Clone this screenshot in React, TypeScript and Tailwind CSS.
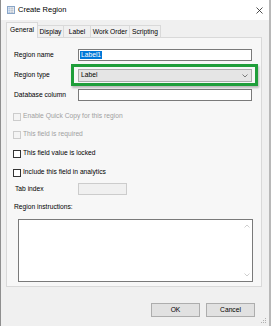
import React from "react";

const tabs = ["General", "Display", "Label", "Work Order", "Scripting"];
const tabWidths: Record<string, string> = {
  General: "w-[32px]",
  Display: "w-[27px]",
  Label: "w-[28px]",
  "Work Order": "w-[40px]",
  Scripting: "w-[32px]",
};

function Check({ label, disabled }: { label: string; disabled?: boolean }) {
  return (
    <div className="ml-[-1px] flex h-[9px] items-center">
      <span
        className={
          disabled
            ? "h-[8px] w-[8px] border border-[#cccccc] bg-[#f4f4f4]"
            : "h-[8px] w-[8px] border border-[#333333] bg-white"
        }
      />
      <span className={disabled ? "ml-[2px] text-[#a0a0a0]" : "ml-[2px] text-black"}>{label}</span>
    </div>
  );
}

function Chevron({ up }: { up?: boolean }) {
  return (
    <svg width="6" height="4" viewBox="0 0 6 4" fill="none">
      <path
        d={up ? "M0.5 3.5L3 1L5.5 3.5" : "M0.5 0.5L3 3L5.5 0.5"}
        stroke="currentColor"
        strokeWidth="0.8"
      />
    </svg>
  );
}

export default function App() {
  return (
    <div className="relative flex h-[326px] w-[271px] flex-col border-l border-r-2 border-l-[#8f8f8f] border-r-[#b8b8b8] bg-[#f0f0f0] font-['Liberation_Sans',Arial,sans-serif] text-[6.7px] leading-none text-black">
      {/* Title bar */}
      <div className="flex h-[20px] items-center bg-white pl-[6px] pr-[6px]">
        <svg width="8" height="8" viewBox="0 0 8 8">
          <rect x="0.5" y="0.5" width="7" height="7" fill="#fff" stroke="#8aa6c8" />
          <rect x="1.5" y="1.6" width="1.2" height="1" fill="#3f78c0" />
          <rect x="3.3" y="1.6" width="3.2" height="1" fill="#9aa5b3" />
          <rect x="1.5" y="3.6" width="1.2" height="1" fill="#3f78c0" />
          <rect x="3.3" y="3.6" width="3.2" height="1" fill="#9aa5b3" />
          <rect x="1.5" y="5.6" width="1.2" height="1" fill="#3f78c0" />
          <rect x="3.3" y="5.6" width="3.2" height="1" fill="#9aa5b3" />
        </svg>
        <span className="ml-[3px] text-[7.5px]">Create Region</span>
        <svg className="ml-auto" width="7" height="7" viewBox="0 0 7 7">
          <path d="M0.5 0.5L6.5 6.5M6.5 0.5L0.5 6.5" stroke="#222" strokeWidth="0.8" />
        </svg>
      </div>

      {/* Tabs + panel */}
      <div className="pl-[5px] pt-[2px]">
        <div className="flex h-[15px] items-end">
          {tabs.map((t, i) =>
            i === 0 ? (
              <div
                key={t}
                className={`${tabWidths[t]} relative z-10 mb-[-1px] flex h-[16px] items-center justify-center border border-b-0 border-[#d9d9d9] bg-[#f7f7f7]`}
              >
                {t}
              </div>
            ) : (
              <div
                key={t}
                className={`${tabWidths[t]} ml-[-1px] flex h-[12px] items-center justify-center border border-b-0 border-[#d9d9d9] bg-[#f0f0f0] pt-[1px]`}
              >
                {t}
              </div>
            )
          )}
        </div>

        <div className="flex h-[250px] w-[256px] flex-col border border-[#d9d9d9] bg-[#f7f7f7] pl-[7px] pt-[11px]">
          <div className="flex h-[12px] items-center">
            <span className="w-[64px]">Region name</span>
            <div className="flex h-[12px] w-[174px] items-center border border-[#7a7a7a] bg-white pl-[1px]">
              <span className="bg-[#0078d7] px-[1px] py-[1px] text-white">Label1</span>
            </div>
          </div>

          <div className="mt-[8px] flex h-[13px] items-center">
            <span className="w-[64px]">Region type</span>
            <div className="relative flex h-[13px] w-[174px] items-center border border-[#acacac] bg-[#e5e5e5] pl-[2px] pr-[3px]">
              <span>Label</span>
              <span className="ml-auto text-[#606060]">
                <Chevron />
              </span>
              <div className="absolute -bottom-[5px] -left-[8px] -right-[7px] -top-[6px] border-[3px] border-[#1f9e3a] shadow-[1px_2px_2px_rgba(0,0,0,0.25)]" />
            </div>
          </div>

          <div className="mt-[7px] flex h-[12px] items-center">
            <span className="w-[64px]">Database column</span>
            <div className="h-[12px] w-[174px] border border-[#7a7a7a] bg-white" />
          </div>

          <div className="mt-[11px]">
            <Check label="Enable Quick Copy for this region" disabled />
          </div>
          <div className="mt-[9px]">
            <Check label="This field is required" disabled />
          </div>
          <div className="mt-[10px]">
            <Check label="This field value is locked" />
          </div>
          <div className="mt-[10px]">
            <Check label="Include this field in analytics" />
          </div>

          <div className="mt-[6px] flex h-[12px] items-center">
            <span className="w-[64px] pl-[1px]">Tab index</span>
            <div className="h-[12px] w-[49px] border border-[#cccccc] bg-[#f0f0f0]" />
          </div>

          <div className="mt-[8px] flex h-[8px] items-center">Region instructions:</div>

          <div className="ml-[4px] mt-[8px] flex h-[63px] w-[235px] border border-[#7a7a7a] bg-white">
            <div className="flex-1" />
            <div className="flex w-[10px] flex-col items-center justify-between py-[4px] text-[#c2c2c2]">
              <Chevron up />
              <Chevron />
            </div>
          </div>
        </div>
      </div>

      {/* Buttons */}
      <div className="mt-[16px] flex justify-end gap-[6px] pr-[14px]">
        <button className="flex h-[14px] w-[49px] items-center justify-center border border-[#adadad] bg-[#e1e1e1]">
          OK
        </button>
        <button className="flex h-[14px] w-[49px] items-center justify-center border border-[#adadad] bg-[#e1e1e1]">
          Cancel
        </button>
      </div>

      {/* Resize grip */}
      <svg className="absolute bottom-[2px] right-[2px]" width="6" height="6" viewBox="0 0 6 6">
        <rect x="4" y="0" width="1" height="1" fill="#b0b0b0" />
        <rect x="2" y="2" width="1" height="1" fill="#b0b0b0" />
        <rect x="4" y="2" width="1" height="1" fill="#b0b0b0" />
        <rect x="0" y="4" width="1" height="1" fill="#b0b0b0" />
        <rect x="2" y="4" width="1" height="1" fill="#b0b0b0" />
        <rect x="4" y="4" width="1" height="1" fill="#b0b0b0" />
      </svg>
    </div>
  );
}
